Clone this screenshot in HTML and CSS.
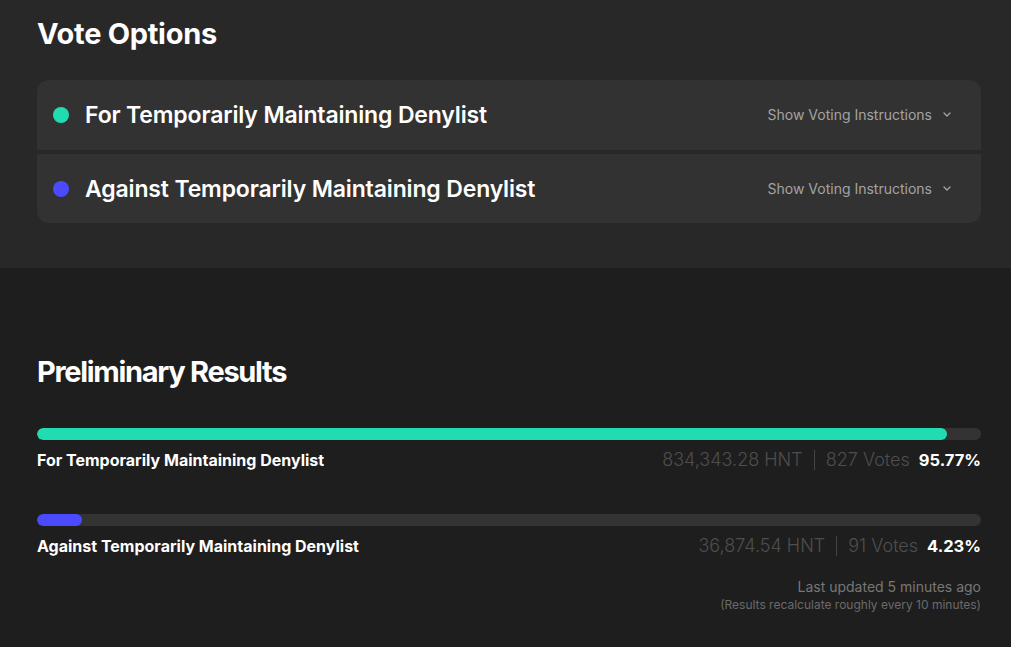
FILE: index.html
```html
<!DOCTYPE html>
<html lang="en">
<head>
    <meta charset="UTF-8">
    <meta name="viewport" content="width=device-width, initial-scale=1.0">
    <title>Vote</title>
    <link rel="stylesheet" href="styles.css">
</head>
<body>
    <section class="options">
        <h2 class="heading">Vote Options</h2>

        <div class="option-list">
            <div class="option">
                <span class="dot dot-for"></span>
                <span class="option-name">For Temporarily Maintaining Denylist</span>
                <button class="instructions">
                    Show Voting Instructions
                    <svg width="8" height="5" viewBox="0 0 8 5"><path d="M1 1l3 3 3-3" fill="none" stroke="currentColor" stroke-width="1.3" stroke-linecap="round" stroke-linejoin="round"/></svg>
                </button>
            </div>
            <div class="option">
                <span class="dot dot-against"></span>
                <span class="option-name">Against Temporarily Maintaining Denylist</span>
                <button class="instructions">
                    Show Voting Instructions
                    <svg width="8" height="5" viewBox="0 0 8 5"><path d="M1 1l3 3 3-3" fill="none" stroke="currentColor" stroke-width="1.3" stroke-linecap="round" stroke-linejoin="round"/></svg>
                </button>
            </div>
        </div>
    </section>

    <section class="results">
        <h2 class="heading heading-tight">Preliminary Results</h2>

        <div class="result">
            <div class="bar"><div class="fill fill-for" style="width: 96.4%"></div></div>
            <div class="result-row">
                <span class="result-name">For Temporarily Maintaining Denylist</span>
                <span class="result-stats">
                    <span class="muted">834,343.28 HNT</span>
                    <span class="divider"></span>
                    <span class="muted">827 Votes</span>
                    <span class="percent">95.77%</span>
                </span>
            </div>
        </div>

        <div class="result">
            <div class="bar"><div class="fill fill-against" style="width: 4.8%"></div></div>
            <div class="result-row">
                <span class="result-name">Against Temporarily Maintaining Denylist</span>
                <span class="result-stats">
                    <span class="muted">36,874.54 HNT</span>
                    <span class="divider"></span>
                    <span class="muted">91 Votes</span>
                    <span class="percent">4.23%</span>
                </span>
            </div>
        </div>

        <div class="updated">
            <p class="updated-main">Last updated 5 minutes ago</p>
            <p class="updated-note">(Results recalculate roughly every 10 minutes)</p>
        </div>
    </section>
</body>
</html>
```

FILE: styles.css
```css
:root {
    --page-bg: #1e1e1e;
    --section-bg: #282828;
    --card-bg: #323232;
    --track-bg: #333333;
    --for-color: #21dcb1;
    --against-color: #4b4bfd;
    --text-color: #ffffff;
}

body {
    font-family: Inter, "Noto Sans", sans-serif;
    background-color: var(--page-bg);
    color: var(--text-color);
    margin: 0;
    padding: 0;
}

.heading {
    margin: 0;
    font-size: 29px;
    line-height: 36px;
    font-weight: 700;
    letter-spacing: -0.01em;
}

.heading-tight {
    letter-spacing: -0.045em;
}

.options {
    background-color: var(--section-bg);
    padding: 16px 30px 45px 37px;
}

.option-list {
    margin-top: 28px;
    display: flex;
    flex-direction: column;
    gap: 4px;
    border-radius: 12px;
    overflow: hidden;
}

.option {
    display: flex;
    align-items: center;
    height: 70px;
    padding: 0 30px 0 16px;
    background-color: var(--card-bg);
}

.option:last-child {
    height: 69px;
}

.dot {
    width: 16px;
    height: 16px;
    border-radius: 50%;
    flex-shrink: 0;
    margin-right: 16px;
}

.dot-for {
    background-color: var(--for-color);
}

.dot-against {
    background-color: var(--against-color);
}

.option-name {
    flex: 1;
    font-size: 23px;
    font-weight: 600;
    letter-spacing: -0.15px;
}

.instructions {
    display: flex;
    align-items: center;
    gap: 11px;
    background: none;
    border: none;
    padding: 0;
    margin-top: -1px;
    color: #a3a3a3;
    font-family: inherit;
    font-size: 14px;
    cursor: pointer;
}

.results {
    padding: 86px 30px 30px 37px;
}

.result {
    margin-top: 38px;
}

.result + .result {
    margin-top: 42px;
}

.bar {
    height: 12px;
    border-radius: 6px;
    background-color: var(--track-bg);
    overflow: hidden;
}

.fill {
    height: 100%;
    border-radius: 6px;
}

.fill-for {
    background-color: var(--for-color);
}

.fill-against {
    background-color: var(--against-color);
}

.result-row {
    display: flex;
    justify-content: space-between;
    align-items: center;
    margin-top: 8px;
    line-height: 24px;
}

.result-name {
    font-size: 16px;
    font-weight: 700;
}

.result-stats {
    display: flex;
    align-items: center;
    font-size: 18px;
}

.muted {
    color: #4e4e4e;
    font-weight: 300;
}

.divider {
    width: 1px;
    height: 20px;
    background-color: #444444;
    margin: 0 11px;
}

.percent {
    margin-left: 9px;
    font-size: 16.5px;
    font-weight: 700;
}

.updated {
    margin-top: 20px;
    text-align: right;
}

.updated-main {
    margin: 0;
    font-size: 14px;
    color: #777777;
    line-height: 18px;
}

.updated-note {
    margin: 0;
    font-size: 12px;
    color: #6a6a6a;
    line-height: 18px;
}
```
